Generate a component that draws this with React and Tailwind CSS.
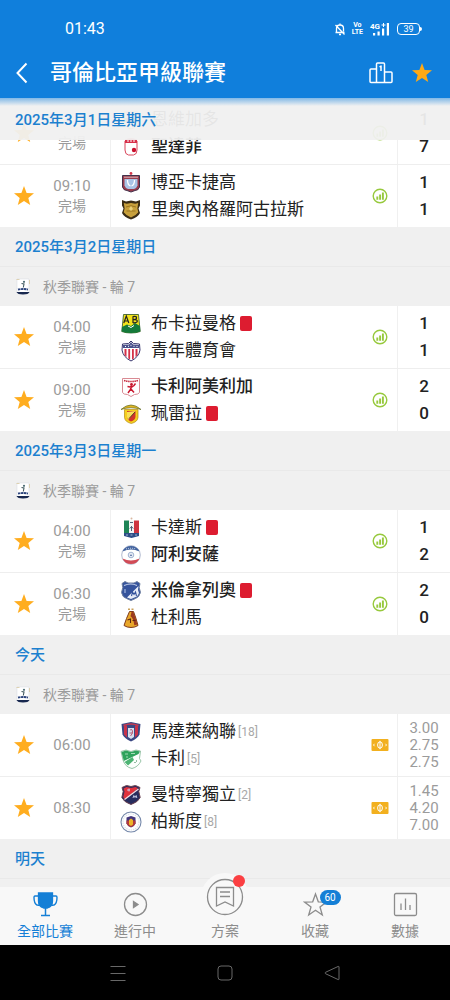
import React from 'react'
import clsx from 'clsx'

const STAR = '12,2 14.6,8.9 22,9.3 16.3,13.9 18.2,21 12,17 5.8,21 7.7,13.9 2,9.3 9.4,8.9'

const logos = {
  envigado: (
    <g>
      <path d="M4 3h14v9q0 6-7 8q-7-2-7-8z" fill="#f0f0f0" stroke="#e07b1f" />
      <path d="M4 9h14v4H4z" fill="#2f8a3c" />
    </g>
  ),
  santafe: (
    <g>
      <path d="M5 5v9q0 4.500 3.500 5h5q3.500-.5 3.500-5V5" fill="#fff" stroke="#d9455a" />
      <path d="M5 3.500q6-2.500 12 0V7H5z" fill="#d8304a" />
      <path d="M7 5h2M10 5h2M13 5h2" stroke="#fff" strokeWidth="1.200" />
      <circle cx="14" cy="14" r="2.200" fill="#c8102e" />
    </g>
  ),
  boyaca: (
    <g>
      <path d="M2.500 3.500h17v11.500q-1 3.500-4.500 3.500l-4 1.500-4-1.500q-3.500 0-4.500-3.500z" fill="#9a3c4c" stroke="#43324c" />
      <path d="M4.500 7h13v6.500q-1 3-3.500 3.500H8q-2.500-.5-3.500-3.500z" fill="#a9c4e6" />
      <path d="M7.500 8q0 5 3 6M14.500 8q0 5-3 6" stroke="#fff" strokeWidth="1.300" fill="none" />
      <path d="M4 5.200h14" stroke="#d9b7bd" />
      <circle cx="11" cy="1.500" r="1.400" fill="#d2374b" />
    </g>
  ),
  rionegro: (
    <g>
      <path d="M2 1l4 1.500 5-1 5 1L20 1v5.500l-1.500 3L20 14q-2 4-9 6.500Q4 18 2 14l1.500-4.500L2 6.500z" fill="#3a2c15" />
      <path d="M3.800 4l3 .7 4.200-.7 4.200.7 3-.7-.8 5.500.9 3.700q-2 3-7.300 5.200-5.300-2.200-7.300-5.200l.9-3.700z" fill="#c8a03c" />
      <path d="M6 8q5-2.500 10 0M6.500 12h9" stroke="#9a741f" fill="none" />
      <path d="M9 10l2-3 2 3-2 2z" fill="#ead07a" />
    </g>
  ),
  bucaramanga: (
    <g>
      <path d="M3.500 1.500h15l1.700 17q-4 1.500-9.200 1.500t-9.200-1.500z" fill="#f3e21b" stroke="#2b5427" strokeWidth=".8" />
      <path d="M2 14l5-2.500 4 1.500 4-3 5 3 .3 5.500q-4 1.500-9.300 1.500t-9.300-1.500z" fill="#14793a" />
      <path d="M8 13l3 1.500 3-2" stroke="#fff" fill="none" />
      <path d="M3.800 10L6.300 3l2.500 7M4.800 8h3M13 3.200V10M13 3.500q4-.5 3.500 1.500 0 1.500-3 1.500 4 0 3.800 1.800T13 9.900" stroke="#222" strokeWidth="1.200" fill="none" />
    </g>
  ),
  junior: (
    <g>
      <path d="M11 1l2.500 2.500L19.500 4l.5 6q-1 7-9 11Q3 17 2 10l.5-6 6-.5z" fill="#fff" stroke="#39376f" />
      <path d="M4.500 9v6l2 2V9zM8.300 9v9.500l1.800 1V9zM12 9v10.500l1.800-1V9zM15.500 9v8l2-2V9z" fill="#d43148" />
      <path d="M11 2l2 2.500 6 .5v3H3V5l6-.5z" fill="#4a528c" />
      <path d="M5 6.500h1M8 6.300h1M10.500 5.300h1M13.500 6.300h1M16.500 6.500h1" stroke="#fff" />
    </g>
  ),
  america: (
    <g>
      <path d="M2.500 2.500h17v14q-1 2-5 2l-3.500 2-3.500-2q-4 0-5-2z" fill="#fff" stroke="#d98a93" />
      <path d="M4 4.500q7 2 14 0" stroke="#c8283c" strokeWidth="1.600" strokeDasharray="1.500 .6" fill="none" />
      <circle cx="11.500" cy="8.500" r="1.400" fill="#c9182f" />
      <path d="M11.500 9.500l-1 4-2.500 3.500M11 13l3 3.500M7.500 10.500l4 .8 2.500-1.800 1.500-2" stroke="#c9182f" strokeWidth="1.500" fill="none" />
    </g>
  ),
  pereira: (
    <g>
      <path d="M1 6.500q10-9 20 0q-10-3.500-20 0z" fill="#e3b622" stroke="#5f6c2a" strokeWidth=".7" />
      <path d="M4.500 6.500H18v8q-.5 4.500-6.700 6-6.300-1.500-6.800-6z" fill="#f5cf1e" stroke="#b58b18" strokeWidth=".7" />
      <path d="M7 8h8.500v6q-.5 3-4.500 4.500-3.500-1.500-4-4.500z" fill="#d0342c" />
      <path d="M15.500 8L8 17l-1-3V9z" fill="#f8e05a" />
      <path d="M9 15.500l6-6.500" stroke="#3b3420" strokeWidth=".8" />
    </g>
  ),
  caldas: (
    <g>
      <path d="M4 3.500h5V17H4z" fill="#1e8456" />
      <path d="M9 3.500h5V17H9z" fill="#f4f4f4" />
      <path d="M14 3.500h5V17h-5z" fill="#cf3340" />
      <path d="M4 16h15v3L11.500 21 4 19z" fill="#2d4d86" />
      <path d="M10 5.500h3M9.800 11.500l1.700-2 1.700 2M11.500 9v5" stroke="#52627a" fill="none" />
      <path d="M6 18h2M10.500 18h2M15 18h2" stroke="#9fb1d2" />
      <circle cx="11.500" cy="1.500" r="1" fill="#d9b7a0" />
    </g>
  ),
  alianza: (
    <g>
      <circle cx="11" cy="11" r="9.300" fill="#fff" stroke="#9ea9c4" strokeWidth=".8" />
      <path d="M2.500 7.500Q5 2 11 2t8.500 5.500q-8.500-4-17 0z" fill="#42639f" />
      <path d="M2.500 14.500Q5 20 11 20t8.500-5.500q-8.500 4-17 0z" fill="#d14b56" />
      <circle cx="11" cy="11" r="2.800" fill="#e6ebf4" stroke="#8ea3c8" strokeWidth=".8" />
      <path d="M10 12l1-2 1 2z" fill="#4b669a" />
      <path d="M6 5q5-1.500 10 0" stroke="#dfe5f0" strokeDasharray="1 1" fill="none" />
    </g>
  ),
  millonarios: (
    <g>
      <path d="M2 3.500l3-2 3 1.500h6l3-1.500 3 2-.8 4 1.300 5q-1.500 5-5 6l-4.500 2-4.500-2q-4-1-5-6l1.300-5z" fill="#35539c" stroke="#6e7f9f" />
      <path d="M18.500 6L18 10l1 3q-1.500 4-4.500 4.500L11 19l-4-1.500z" fill="#e8edf7" />
      <path d="M11.500 16l1-4 1.500 2.500 1.500-2.500 1 4" stroke="#35539c" strokeWidth="1.100" fill="none" />
      <path d="M4 5.500q7-3 13 0" stroke="#c7d2ea" strokeWidth="1.200" fill="none" />
      <path d="M5 9v4" stroke="#8fa4d3" strokeWidth="1.500" />
    </g>
  ),
  tolima: (
    <g>
      <path d="M9.500 4.500h4l2.500 7 2 7q-3 2-7 2t-7-2l2.500-7z" fill="#e9a72a" stroke="#7f3a1b" />
      <path d="M11.500 5h1.800l2.500 7 1.500 5.500-3 .8q-.8-7-3.800-9z" fill="#9c3a1f" />
      <path d="M7.500 13l3-1v4M12.500 13.500h3" stroke="#5e2413" strokeWidth="1.100" fill="none" />
      <path d="M8 2.200h2M11.500 2.200h2" stroke="#c9a05a" strokeWidth="1.600" />
    </g>
  ),
  magdalena: (
    <g>
      <path d="M1.500 3l9.500-2 9.500 2-1 10.500q-2 4-8.500 7-6.500-3-8.500-7z" fill="#3b4883" />
      <path d="M4 4.500h3v12L4 13.500zM15 4.500h3v9l-3 3z" fill="#c8334a" />
      <path d="M8 7h6v9l-3 2-3-2z" fill="#d5dfee" />
      <path d="M3.500 4.500q7.500-3 15 0" stroke="#c83a50" strokeWidth="1.500" fill="none" />
      <path d="M10 9q2-1.500 2.500 1t-2 5M9.500 12h3" stroke="#b03a55" strokeWidth=".8" fill="none" />
    </g>
  ),
  cali: (
    <g>
      <path d="M1 3.500l5-1.500 5 1.500L16 2l4.500 1-1 7.500L21 13q-3 6-9 7.500Q5 19 3 12z" fill="#fdfffd" stroke="#7fb592" strokeWidth=".8" />
      <path d="M1.500 4L6 2.500 11 4l5-1.500 4 1L18.500 6 3.800 13z" fill="#2fa35c" />
      <path d="M4.500 14l8-5 1.500 3-6 5.500z" fill="#4db473" />
      <path d="M5 6h3M11 5.500h4M6 9h2" stroke="#a3dab6" />
      <path d="M14.500 14.500h1M16.500 12.500v1" stroke="#2d7a4a" />
    </g>
  ),
  medellin: (
    <g>
      <path d="M2 3.500l4.500-2 4.500 1 4.500-1 4.500 2-1.200 4 1.400 6q-2 4.500-9.200 7-7.200-2.500-9.200-7l1.400-6z" fill="#262c5e" stroke="#6b4150" />
      <path d="M3.500 4.500l3-1.500 4.500 1 4.500-1 2.500 1.300-13 11-1.800-2L4.500 7.500z" fill="#e0313c" />
      <path d="M4.500 15.500L18.500 5" stroke="#f3dfe2" strokeWidth="1.200" />
      <path d="M13 14l.8-2.500 1.200 2 1.200-2 .6 2.500M7 6h3M9 4.500v3" stroke="#cfd3ee" strokeWidth=".9" fill="none" />
    </g>
  ),
  pasto: (
    <g>
      <circle cx="11" cy="11" r="10" fill="#fff" stroke="#7588aa" strokeWidth="1.100" />
      <circle cx="11" cy="11" r="8" fill="none" stroke="#dbe1eb" strokeWidth="1.200" strokeDasharray="1.300 1" />
      <path d="M6.500 6.500L11 5l4.500 1.500v6q-1 3-4.500 4-3.500-1-4.500-4z" fill="#43357b" />
      <path d="M6.500 9.500h9v3q-1 2.500-4.500 3.500-3.500-1-4.500-3.500z" fill="#b33a3c" />
      <path d="M9 9l2-1.500L13 9v4.500L11 15l-2-1.500z" fill="#edb52b" />
    </g>
  ),
}

function Crest({ id }) {
  return (
    <svg viewBox="0 0 22 22" className="h-[22px] w-[22px] shrink-0" fill="none" aria-hidden="true">
      {logos[id]}
    </svg>
  )
}

function LeagueLogo() {
  return (
    <svg viewBox="0 0 16 18" className="h-[18px] w-4 shrink-0" aria-hidden="true">
      <path d="M2 1h12v14H2z" fill="#fff" stroke="#dcdfe6" strokeWidth=".6" />
      <path d="M1.500 1.500h3M14.500 2v4" stroke="#d8c9a0" strokeWidth=".8" />
      <circle cx="9" cy="3.800" r="1.100" fill="#4d6d74" />
      <path d="M6.500 5.500l2.500.5L8.300 9.500" stroke="#41595f" strokeWidth="1.100" fill="none" />
      <path d="M3 11.500q5-1 10 0" stroke="#2c447c" strokeWidth="1.800" strokeDasharray="2.500 .5" fill="none" />
      <path d="M1.500 14h13q-1 2.500-6.500 2.500t-6.500-2.500z" fill="#18284f" />
    </svg>
  )
}

function Star({ className }) {
  return (
    <svg viewBox="0 0 24 24" className={clsx('h-6 w-6', className)} aria-hidden="true">
      <polygon points={STAR} fill="currentColor" />
    </svg>
  )
}

function StatsIcon() {
  return (
    <svg viewBox="0 0 16 16" className="h-4 w-4" fill="none" aria-hidden="true">
      <circle cx="8" cy="8" r="6.800" stroke="#97c93d" strokeWidth="1.400" />
      <path d="M5.300 8.500v3.300M8.100 6.500v5.300M10.900 4.500v7.300" stroke="#97c93d" strokeWidth="1.900" />
    </svg>
  )
}

function OddsIcon() {
  return (
    <svg viewBox="0 0 18 14" className="h-[14px] w-[18px]" fill="none" aria-hidden="true">
      <rect x=".5" y="1" width="17" height="12" rx="1" fill="#f2b01e" />
      <ellipse cx="9" cy="7" rx="2.400" ry="3.200" stroke="#fff" />
      <path d="M9 2.800v8.400" stroke="#fff" />
      <path d="M3.500 5.800L2.500 7l1 1.200M14.500 5.800l1 1.200-1 1.200" stroke="#fff" strokeWidth=".9" />
    </svg>
  )
}

const topMatches = [
  {
    // kick-off time is scrolled under the pinned date
    time: '',
    done: true,
    teams: [
      { id: 'envigado', name: '恩維加多', score: 1 },
      { id: 'santafe', name: '聖達菲', score: 7, win: true },
    ],
  },
  {
    time: '09:10',
    done: true,
    teams: [
      { id: 'boyaca', name: '博亞卡捷高', score: 1 },
      { id: 'rionegro', name: '里奧內格羅阿古拉斯', score: 1 },
    ],
  },
]

const sections = [
  {
    date: '2025年3月2日星期日',
    matches: [
      {
        time: '04:00',
        done: true,
        teams: [
          { id: 'bucaramanga', name: '布卡拉曼格', score: 1, red: true },
          { id: 'junior', name: '青年體育會', score: 1 },
        ],
      },
      {
        time: '09:00',
        done: true,
        teams: [
          { id: 'america', name: '卡利阿美利加', score: 2, win: true },
          { id: 'pereira', name: '珮雷拉', score: 0, red: true },
        ],
      },
    ],
  },
  {
    date: '2025年3月3日星期一',
    matches: [
      {
        time: '04:00',
        done: true,
        teams: [
          { id: 'caldas', name: '卡達斯', score: 1, red: true },
          { id: 'alianza', name: '阿利安薩', score: 2, win: true },
        ],
      },
      {
        time: '06:30',
        done: true,
        teams: [
          { id: 'millonarios', name: '米倫拿列奧', score: 2, win: true, red: true },
          { id: 'tolima', name: '杜利馬', score: 0 },
        ],
      },
    ],
  },
  {
    date: '今天',
    matches: [
      {
        time: '06:00',
        odds: ['3.00', '2.75', '2.75'],
        teams: [
          { id: 'magdalena', name: '馬達萊納聯', rank: 18 },
          { id: 'cali', name: '卡利', rank: 5 },
        ],
      },
      {
        time: '08:30',
        odds: ['1.45', '4.20', '7.00'],
        teams: [
          { id: 'medellin', name: '曼特寧獨立', rank: 2 },
          { id: 'pasto', name: '柏斯度', rank: 8 },
        ],
      },
    ],
  },
]

function MatchRow({ match }) {
  return (
    <li className="box-content flex h-[62px] items-stretch bg-white">
      <div className="flex w-[111px] shrink-0 items-center border-r border-[#f0f0f0]">
        <button type="button" aria-label="收藏" className="flex w-12 justify-center text-[#ffad1f]">
          <Star />
        </button>
        <div className="flex w-12 flex-col items-center text-[#9b9b9b]">
          <span className="h-5 text-[15px] leading-5">{match.time}</span>
          {match.done && <span className="text-sm leading-5">完場</span>}
        </div>
      </div>

      <div className="flex min-w-0 flex-1 flex-col justify-center pl-[9px]">
        {match.teams.map((team) => (
          <div key={team.id} className="flex h-[27px] items-center">
            <Crest id={team.id} />
            <span
              className={clsx(
                'ml-[9px] text-[17px] leading-[27px] whitespace-nowrap text-[#222]',
                team.win && 'font-medium'
              )}
            >
              {team.name}
            </span>
            {team.rank && <span className="ml-0.5 text-xs text-[#a8a8a8]">[{team.rank}]</span>}
            {team.red && <span className="ml-1 h-[15px] w-3 rounded-xs bg-[#dd1c30]" />}
          </div>
        ))}
      </div>

      <div className="flex w-[34px] shrink-0 items-center justify-center">
        {match.odds ? <OddsIcon /> : <StatsIcon />}
      </div>

      <div className="flex w-[53px] shrink-0 flex-col items-center justify-center border-l border-[#f0f0f0]">
        {match.odds
          ? match.odds.map((odd, i) => (
              <span key={i} className="text-[15px] leading-[17px] text-[#9b9b9b]">
                {odd}
              </span>
            ))
          : match.teams.map((team) => (
              <span key={team.id} className="text-[17px] leading-[27px] font-medium text-[#222]">
                {team.score}
              </span>
            ))}
      </div>
    </li>
  )
}

function MatchList({ matches }) {
  return (
    <ul className="divide-y divide-[#eeeeee]">
      {matches.map((match) => (
        <MatchRow key={match.time} match={match} />
      ))}
    </ul>
  )
}

function DateHeading({ children }) {
  return (
    <h2 className="flex h-10 items-center border-b border-[#e9e9e9] px-[15px] pt-0.5 text-[15px] font-medium text-[#1c80cf]">
      {children}
    </h2>
  )
}

function StatusBar() {
  return (
    <div className="flex h-12 items-center justify-between pt-2.5 pr-7 pl-[65px]">
      <span className="text-base leading-5">01:43</span>
      <div className="flex items-center gap-1.5">
        <svg viewBox="0 0 12 14" className="h-[14px] w-3" fill="none" stroke="currentColor" strokeWidth="1.300" aria-hidden="true">
          <path d="M1.500 10.500h9M2.500 10.500V6.500Q2.500 3 6 3t3.500 3.500v3M6 1.500V3M5 12.500h2M1.500 3l9 9.500" />
        </svg>
        <span className="flex flex-col items-center text-[7px] leading-[7px] font-bold">
          <span>Vo</span>
          <span>LTE</span>
        </span>
        <svg viewBox="0 0 22 14" className="h-[14px] w-[22px]" fill="currentColor" aria-hidden="true">
          <text x="1" y="7" fontSize="8" fontWeight="700">4G</text>
          <path d="M4 11h2.200v2.500H4zM8.500 9.500h2.200v4H8.500zM13 6.500h2.200v7H13zM17.800 1H20v12.500h-2.200zM12.500 2.500h4v1h-4zM14 1h1v4h-1z" />
        </svg>
        <span className="flex items-center">
          <span className="flex h-3 w-[23px] items-center justify-center rounded border border-white text-[9px] leading-none">
            39
          </span>
          <span className="h-1 w-0.5 rounded-r bg-white" />
        </span>
      </div>
    </div>
  )
}

const tabs = [
  {
    label: '全部比賽',
    active: true,
    icon: (
      <>
        <path d="M5.500 1h14v8q0 5.500-5 7h-4q-5-1.500-5-7z" fill="currentColor" />
        <path d="M5.500 4H2q-1 0-1 1.500 0 6 3 7.500 1 .6 2.500 0M19.500 4H23q1 0 1 1.500 0 6-3 7.500-1 .6-2.500 0" strokeWidth="1.400" />
        <path d="M12.500 15v8M8 23.500h9" strokeWidth="1.500" />
      </>
    ),
  },
  {
    label: '進行中',
    icon: (
      <>
        <circle cx="12.500" cy="12.500" r="11" />
        <path d="M10.500 9.500l4.500 3-4.500 3z" fill="currentColor" />
      </>
    ),
  },
  { label: '方案', raised: true },
  {
    label: '收藏',
    badge: 60,
    icon: <path d="M12.500 2l2.800 7.800 8.200.2-6.500 5 2.300 8-6.800-4.700L5.700 23 8 15 1.500 10l8.200-.2z" />,
  },
  {
    label: '數據',
    icon: (
      <>
        <rect x="1.500" y="1.500" width="22" height="22" rx="1.500" />
        <path d="M8 11.500V18M12.500 6.500V18M17 13v5" />
      </>
    ),
  },
]

function TabBar() {
  return (
    <nav className="relative z-10 grid grid-cols-5 bg-[#f8f8f8]">
      {tabs.map((tab) => (
        <button
          key={tab.label}
          type="button"
          className={clsx(
            'flex h-[58px] flex-col items-center justify-end pb-1',
            tab.active ? 'text-[#147fd6]' : 'text-[#8c8c8c]'
          )}
        >
          {tab.raised ? (
            <span className="relative -mt-6 flex h-12 w-12 items-center justify-center rounded-full bg-[#f8f8f8]">
              <svg viewBox="0 0 38 38" className="h-[38px] w-[38px]" fill="none" stroke="currentColor" strokeWidth="1.300" aria-hidden="true">
                <circle cx="19" cy="19" r="17.500" />
                <path d="M10.500 9.500h17V28L19 24l-8.500 4zM14 14h10M14 18.500h10" />
              </svg>
              <span className="absolute top-0.5 right-1 h-3 w-3 rounded-full bg-[#fb3f42]" />
            </span>
          ) : (
            <span className="relative mb-1">
              <svg viewBox="0 0 25 25" className="h-[25px] w-[25px]" fill="none" stroke="currentColor" strokeWidth="1.300" aria-hidden="true">
                {tab.icon}
              </svg>
              {tab.badge && (
                <span className="absolute -top-0.5 left-[17px] flex h-[15px] w-[21px] items-center justify-center rounded-full bg-[#147fd6] text-[10px] leading-none text-white">
                  {tab.badge}
                </span>
              )}
            </span>
          )}
          <span className="text-sm leading-5">{tab.label}</span>
        </button>
      ))}
    </nav>
  )
}

function SystemBar() {
  return (
    <div className="grid h-[55px] grid-cols-3 place-items-center bg-black px-16 text-[#686868]">
      <button type="button" aria-label="選單">
        <svg viewBox="0 0 16 16" className="h-4 w-4" fill="none" stroke="currentColor" aria-hidden="true">
          <path d="M.5 1.500h15M.5 8.500h15M.5 15.500h15" />
        </svg>
      </button>
      <button type="button" aria-label="主畫面">
        <svg viewBox="0 0 16 16" className="h-4 w-4" fill="none" stroke="currentColor" aria-hidden="true">
          <rect x="1" y="1" width="14" height="14" rx="3" />
        </svg>
      </button>
      <button type="button" aria-label="返回">
        <svg viewBox="0 0 16 16" className="h-4 w-4" fill="none" stroke="currentColor" aria-hidden="true">
          <path d="M15 2v12q0 1-1 .5L1.500 8.700q-1-.7 0-1.400L14 1.500q1-.5 1 .5z" />
        </svg>
      </button>
    </div>
  )
}

export default function App() {
  return (
    <div className="flex h-screen flex-col bg-[#f0f0f0] font-['Roboto','Noto_Sans_CJK_TC',sans-serif]">
      <header className="shrink-0 bg-[#107fdc] text-white">
        <StatusBar />
        <div className="flex h-[50px] items-center pr-4 pl-3">
          <button type="button" aria-label="返回">
            <svg viewBox="0 0 20 24" className="h-6 w-5" fill="none" stroke="currentColor" strokeWidth="2" aria-hidden="true">
              <path d="M14.500 2.500L5.500 12l9 9.500" />
            </svg>
          </button>
          <h1 className="ml-[18px] flex-1 text-[22px] leading-8 font-medium">哥倫比亞甲級聯賽</h1>
          <button type="button" aria-label="積分榜">
            <svg viewBox="0 0 26 24" className="h-6 w-[26px]" fill="none" stroke="currentColor" strokeWidth="1.500" strokeLinejoin="round" aria-hidden="true">
              <path d="M8.500 21.500V3q0-1 1-1h6q1 0 1 1v18.500M8.500 8H3Q2 8 2 9v11.500q0 1 1 1h20q1 0 1-1V12q0-1-1-1h-6.500M11.500 6l1.500-1v5" />
            </svg>
          </button>
          <button type="button" aria-label="收藏" className="ml-4 text-[#ffa914]">
            <Star />
          </button>
        </div>
      </header>

      <main className="relative min-h-0 flex-1 overflow-hidden pt-1">
        <MatchList matches={topMatches} />
        {sections.map((section) => (
          <section key={section.date}>
            <DateHeading>{section.date}</DateHeading>
            <div className="flex h-[39px] items-center gap-3 px-[15px] text-sm text-[#9b9b9b]">
              <LeagueLogo />
              <h3>秋季聯賽 - 輪 7</h3>
            </div>
            <MatchList matches={section.matches} />
          </section>
        ))}
        <DateHeading>明天</DateHeading>

        {/* pinned date over the scrolled list */}
        <div className="absolute inset-x-0 top-0 flex h-[42px] items-center bg-[#f0f0f0]/95 px-[15px] pt-0.5 text-[15px] font-medium text-[#1c80cf]">
          2025年3月1日星期六
        </div>
        <div className="absolute inset-x-0 top-0 h-2 bg-linear-to-b from-[#107fdc]/50 to-transparent" />
      </main>

      <TabBar />
      <SystemBar />
    </div>
  )
}
